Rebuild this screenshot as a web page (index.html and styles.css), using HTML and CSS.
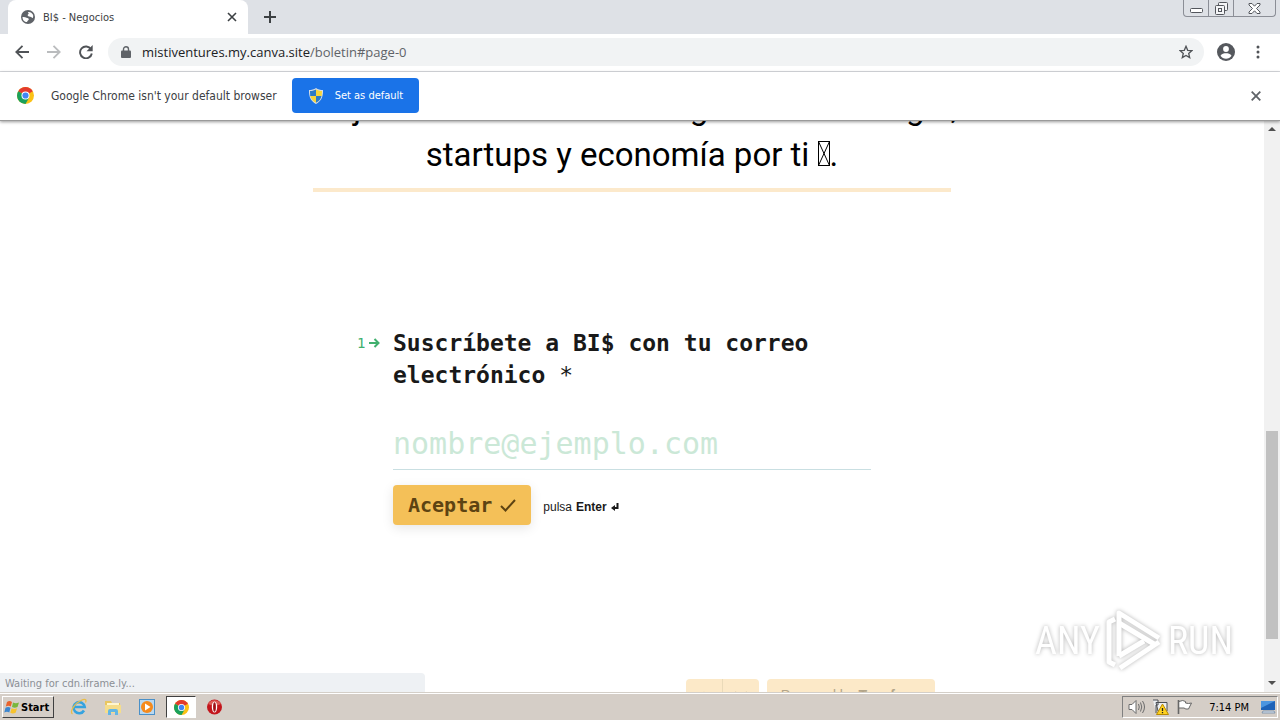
FILE: index.html
```html
<!DOCTYPE html>
<html lang="es">
<head>
    <meta charset="UTF-8">
    <meta name="viewport" content="width=device-width, initial-scale=1.0">
    <title>BI$ - Negocios</title>
    <link rel="stylesheet" href="styles.css">
</head>
<body>
    <svg class="defs" width="0" height="0" aria-hidden="true">
        <symbol id="chrome" viewBox="0 0 16 16">
            <circle cx="8" cy="8" r="8" fill="#fbc116"/>
            <path d="M8 8 1.1 4A8 8 0 0 1 14.9 4z" fill="#e33b2e"/>
            <path d="M1.1 4A8 8 0 0 0 8 16l3.4-6L8 8z" fill="#1aa15c"/>
            <circle cx="8" cy="8" r="3.8" fill="#fff"/>
            <circle cx="8" cy="8" r="2.9" fill="#4285f4"/>
        </symbol>
    </svg>

    <header class="tabstrip">
        <div class="tab">
            <svg class="globe" width="14" height="14" viewBox="0 0 14 14">
                <circle cx="7" cy="7" r="7" fill="#5f6368"/>
                <path d="M1.500 7c1.500-.3 3 .1 4 .8 1 .6 2.500.4 2.300 1.600-.2 1-1.500 1-1.800 2.600C3.500 12 1.500 10 1.500 7zM7 2c2-.4 4 .6 5 2.800.4 1.200.2 2.400-.2 3.200-1.300-.2-1.300-1.300-2.600-1.300-1.400 0-2.700-.5-2.500-1.700.1-.8 1-.6 1-1.400C7.700 2.900 7 2.800 7 2z" fill="#fff"/>
            </svg>
            <span class="tab-title">BI$ - Negocios</span>
            <button class="icon-btn" aria-label="Close tab">
                <svg width="10" height="10" viewBox="0 0 10 10"><path d="M1 1l8 8M9 1L1 9" stroke="#3c4043" stroke-width="1.600"/></svg>
            </button>
        </div>
        <button class="icon-btn new-tab" aria-label="New tab">
            <svg width="12" height="12" viewBox="0 0 12 12"><path d="M6 0v12M0 6h12" stroke="#3c4043" stroke-width="2"/></svg>
        </button>
        <div class="window-buttons">
            <button class="minimize" aria-label="Minimize">
                <svg width="13" height="5" viewBox="0 0 13 5"><rect x=".5" y=".5" width="12" height="4" rx="1" fill="#fff" stroke="#53565c"/></svg>
            </button>
            <button aria-label="Restore">
                <svg width="13" height="13" viewBox="0 0 13 13" fill="#f4f5f7" stroke="#53565c"><rect x="3.500" y=".5" width="9" height="8" rx="1"/><rect x=".5" y="3.500" width="9" height="9" rx="1"/><rect x="3.500" y="6.500" width="3" height="3"/></svg>
            </button>
            <button class="wide" aria-label="Close">
                <svg width="13" height="11" viewBox="0 0 13 11"><path d="M1 .5h3l2.500 2.700L9 .5h3v1.500L8.500 5.500 12 9v1.500H9L6.500 7.800 4 10.500H1V9l3.500-3.500L1 2z" fill="#fff" stroke="#53565c"/></svg>
            </button>
        </div>
    </header>

    <nav class="toolbar">
        <button class="icon-btn" aria-label="Back">
            <svg width="14" height="14" viewBox="0 0 14 14" fill="none" stroke="#505357" stroke-width="1.800"><path d="M14 7H1.500M7.500 .8 1.300 7l6.200 6.200"/></svg>
        </button>
        <button class="icon-btn" aria-label="Forward">
            <svg width="14" height="14" viewBox="0 0 14 14" fill="none" stroke="#babcbe" stroke-width="1.800"><path d="M0 7h12.500M6.500 .8 12.700 7l-6.200 6.200"/></svg>
        </button>
        <button class="icon-btn" aria-label="Reload">
            <svg width="14" height="14" viewBox="0 0 14 14"><path d="M12 4.300A5.900 5.900 0 1 0 12.800 8.500" fill="none" stroke="#505357" stroke-width="1.900"/><path d="M13.700 0v6.200H7.500z" fill="#505357"/></svg>
        </button>
        <div class="address">
            <svg width="10" height="12" viewBox="0 0 10 12"><rect y="4.500" width="10" height="7.500" rx="1" fill="#5f6368"/><path d="M2.500 5V3.200a2.500 2.500 0 0 1 5 0V5" fill="none" stroke="#5f6368" stroke-width="1.400"/></svg>
            <a class="url" href="#page-0">mistiventures.my.canva.site<span>/boletin#page-0</span></a>
            <button class="icon-btn" aria-label="Bookmark">
                <svg width="14" height="14" viewBox="0 0 14 14"><path d="M7 1.300l1.700 4 4.200.3-3.200 2.800 1 4.200L7 10.400l-3.700 2.200 1-4.200L1.100 5.600l4.200-.3z" fill="none" stroke="#505357" stroke-width="1.300"/></svg>
            </button>
        </div>
        <button class="icon-btn" aria-label="Profile">
            <svg width="18" height="18" viewBox="0 0 18 18"><circle cx="9" cy="9" r="9" fill="#55585d"/><circle cx="9" cy="6" r="2.900" fill="#fff"/><path d="M3.500 12.800c1-2 3.500-2.600 5.500-2.600s4.500.6 5.500 2.600a6.600 6.600 0 0 1-11 0z" fill="#fff"/></svg>
        </button>
        <button class="icon-btn menu-btn" aria-label="Menu">
            <svg width="4" height="14" viewBox="0 0 4 14" fill="#505357"><circle cx="2" cy="2" r="1.500"/><circle cx="2" cy="7" r="1.500"/><circle cx="2" cy="12" r="1.500"/></svg>
        </button>
    </nav>

    <div class="infobar">
        <svg width="17" height="17"><use href="#chrome"/></svg>
        <span class="infobar-text">Google Chrome isn't your default browser</span>
        <button class="default-btn">
            <svg width="14" height="16" viewBox="0 0 14 16"><path d="M7 0c2 1.500 4.500 2 7 2 .3 6-1.500 11-7 14C1.500 13 -.3 8 0 2c2.500 0 5-.5 7-2z" fill="#d5dde4"/><path d="M7 1.500V8H1.200L1 3C3.500 3 5.500 2.400 7 1.500zM7 8h5.500c-.5 3-2.500 5.300-5.500 6.800z" fill="#2c7bc6"/><path d="M7 1.500V8h5.700L13 3C10.500 3 8.500 2.400 7 1.500zM7 8H1.300c.7 3 2.700 5.300 5.700 6.800z" fill="#f6d53b"/></svg>
            Set as default
        </button>
        <button class="icon-btn infobar-close" aria-label="Dismiss">
            <svg width="10" height="10" viewBox="0 0 10 10"><path d="M.7 .7l8.600 8.600M9.300 .7L.7 9.300" stroke="#5f6368" stroke-width="1.800"/></svg>
        </button>
    </div>

    <div class="viewport">
        <main class="page">
            <h1 class="headline">
                Mejores noticias de los negocios tecnología,<br>
                startups y economía por ti <svg class="tofu" width="12" height="25" viewBox="0 0 12 25" fill="none" stroke="#000"><rect x=".5" y=".5" width="11" height="24"/><path d="M.5 .5l11 24M11.500 .5l-11 24"/></svg>.
            </h1>
            <hr class="rule">
            <form class="question">
                <span class="number">1
                    <svg width="11" height="10" viewBox="0 0 11 10"><path d="M0 5h9M5.500 1l4 4-4 4" fill="none" stroke="#41b06e" stroke-width="2"/></svg>
                </span>
                <div class="answer">
                    <label for="email">Suscríbete a BI$ con tu correo electrónico <span>*</span></label>
                    <input type="email" id="email" placeholder="nombre@ejemplo.com">
                    <div class="actions">
                        <button type="button" class="accept">Aceptar
                            <svg width="16" height="13" viewBox="0 0 16 13"><path d="M1 7l4.500 4.500L15 1" fill="none" stroke="#5d4312" stroke-width="2"/></svg>
                        </button>
                        <span class="hint">pulsa <b>Enter</b>
                            <svg width="8" height="8" viewBox="0 0 8 8"><path d="M6.500 0v5H3" fill="none" stroke="#191919" stroke-width="2"/><path d="M0 5l4-3v6z" fill="#191919"/></svg>
                        </span>
                    </div>
                </div>
            </form>
            <footer class="form-footer">
                <div class="pager">
                    <button aria-label="Anterior"><svg width="14" height="9" viewBox="0 0 14 9"><path d="M1 8l6-6 6 6" fill="none" stroke="#d8c8aa" stroke-width="2"/></svg></button>
                    <button aria-label="Siguiente"><svg width="14" height="9" viewBox="0 0 14 9"><path d="M1 1l6 6 6-6" fill="none" stroke="#d8c8aa" stroke-width="2"/></svg></button>
                </div>
                <a class="powered" href="#typeform">Powered by <b>Typeform</b></a>
            </footer>
        </main>
        <div class="scrollbar">
            <svg width="8" height="4" viewBox="0 0 8 4"><path d="M0 4l4-4 4 4z" fill="#505050"/></svg>
            <div class="track"><div class="thumb"></div></div>
            <svg width="8" height="4" viewBox="0 0 8 4"><path d="M0 0l4 4 4-4z" fill="#505050"/></svg>
        </div>
        <div class="status">Waiting for cdn.iframe.ly...</div>
        <div class="watermark">
            <span>ANY</span>
            <svg width="60" height="66" viewBox="0 0 60 66" fill="none" stroke="#fff" stroke-width="5" stroke-linejoin="round">
                <path d="M11 11 5 14v40l6 3"/>
                <path d="M15 48V5l40 25"/>
                <path d="M15 15l35 21"/>
                <path d="M55 34 16 60"/>
                <path d="M15 48l25-15"/>
            </svg>
            <span>RUN</span>
        </div>
    </div>

    <footer class="taskbar">
        <button class="start">
            <svg width="16" height="15" viewBox="0 0 16 15"><path d="M3 2c2-1.500 3.500-1 5 0L6.800 6.500c-1.500-1-3-1.200-5 0z" fill="#e9632c"/><path d="M9 2.500c2 1 3.500 1 6 0l-1.500 4.500c-2 1-3.500 1-5.500 0z" fill="#79b73c"/><path d="M1.500 7.800c2-1.200 3.500-1 5 0L5.300 12.500c-1.500-1-3-1.200-5 0z" fill="#3c86cf"/><path d="M7.600 8.200c2 1 3.500 1 5.500 0l-1.500 4.500c-2 1-3.500 1-5.300 0z" fill="#f7c32e"/></svg>
            Start
        </button>
        <div class="apps">
            <button aria-label="Internet Explorer">
                <svg width="18" height="18" viewBox="0 0 18 18" fill="none"><path d="M14 12.500A5.600 5.600 0 1 1 14.700 9H5" stroke="#35a3df" stroke-width="2.600"/><path d="M2.500 16C-1 14 5 5 11 2.500c4-2 6-1 4.500 2" stroke="#e9bd48" stroke-width="1.300"/></svg>
            </button>
            <button aria-label="Explorer">
                <svg width="18" height="18" viewBox="0 0 18 18"><path d="M1 3h6l1 2h8v10H1z" fill="#e9c65f"/><path d="M3 5h12v4H3z" fill="#fff6cf"/><path d="M1 7h16v8H1z" fill="#f5dd8b"/><path d="M4 17v-4q0-2 2-2h6q2 0 2 2v4h-3v-3H7v3z" fill="#62b6e4"/></svg>
            </button>
            <button aria-label="Media Player">
                <svg width="18" height="18" viewBox="0 0 18 18"><rect x="1.500" y="1.500" width="15" height="15" fill="#b9d8f0" stroke="#4a90c8"/><circle cx="9" cy="9" r="6" fill="#f58a1c"/><path d="M7 5.500 12.500 9 7 12.500z" fill="#fff"/></svg>
            </button>
            <button class="active" aria-label="Chrome">
                <svg width="15" height="15"><use href="#chrome"/></svg>
            </button>
            <button aria-label="Opera">
                <svg width="18" height="18" viewBox="0 0 18 18"><circle cx="8.500" cy="9" r="7.500" fill="#c3151c"/><path d="M2 6a7.500 7.500 0 0 1 13 0q-6.500 3-13 0z" fill="#dc5a55"/><ellipse cx="8.500" cy="9" rx="2.700" ry="5.500" fill="#fff"/><ellipse cx="8.500" cy="9" rx="1.400" ry="4.800" fill="#a11116"/></svg>
            </button>
        </div>
        <div class="tray">
            <svg width="18" height="16" viewBox="0 0 18 16" fill="none" stroke="#6b6b6b"><path d="M1 5.500h3l4-4v13l-4-4H1z" fill="#fff"/><path d="M10.500 5q1.500 3 0 6M12.500 3.500q2.500 4.500 0 9M14.500 2q4 6 0 12"/></svg>
            <svg width="18" height="16" viewBox="0 0 18 16"><path d="M1 1h5v5H4v8M4 3.500h11V12H6z" fill="#eceff2" stroke="#4b4f55"/><path d="M10.500 5 16.500 15.500h-12z" fill="#ffd21f" stroke="#b98a00"/><path d="M10.500 9v3M10.500 13v1.300" stroke="#222" stroke-width="1.300"/></svg>
            <svg width="18" height="16" viewBox="0 0 18 16"><path d="M3 2.500q4-2 6.500 0v1.500q3 1 6 0L13.500 8l-1 2q-3 .5-4.500-1H3" fill="#fff" stroke="#666"/><path d="M2.500 1v14" stroke="#666" stroke-width="1.600"/></svg>
            <time>7:14 PM</time>
            <svg width="16" height="16" viewBox="0 0 16 16"><path d="M1 2h14v9H1z" fill="#1d62b8"/><path d="M1 2h14L1 9z" fill="#4b95e0"/><path d="M3 12h11l1 2H2z" fill="#dfe8f3" stroke="#8196ad"/></svg>
        </div>
    </footer>
</body>
</html>
```
FILE: styles.css
```css
* {
    margin: 0;
    padding: 0;
    box-sizing: border-box;
}

body {
    height: 100vh;
    display: flex;
    flex-direction: column;
    overflow: hidden;
    background: #fff;
    color: #3c4043;
    font-family: "DejaVu Sans Condensed", "DejaVu Sans", sans-serif;
    font-size: 11px;
}

button {
    border: none;
    background: none;
    font: inherit;
    color: inherit;
    cursor: pointer;
}

a {
    color: inherit;
    text-decoration: none;
}

svg {
    display: block;
    flex: none;
}

.defs {
    position: absolute;
}

.icon-btn {
    display: flex;
    align-items: center;
    justify-content: center;
}

/* tab strip */
.tabstrip {
    height: 34px;
    flex: none;
    display: flex;
    align-items: center;
    padding-left: 8px;
    background: #dee1e6;
}

.tab {
    width: 240px;
    height: 34px;
    display: flex;
    align-items: center;
    padding: 0 11px 0 13px;
    background: #fff;
    border-radius: 8px 8px 0 0;
}

.tab-title {
    flex: 1;
    margin-left: 8px;
}

.new-tab {
    margin-left: 16px;
}

.window-buttons {
    display: flex;
    align-self: flex-start;
    height: 17px;
    margin: 0 4px 0 auto;
    border: 1px solid #8b8e96;
    border-top: none;
    border-radius: 0 0 4px 4px;
}

.window-buttons button {
    width: 25px;
    display: flex;
    align-items: center;
    justify-content: center;
    border-right: 1px solid #8b8e96;
}

.window-buttons .minimize {
    align-items: flex-end;
    padding-bottom: 3px;
}

.window-buttons .wide {
    width: 41px;
    border-right: none;
}

/* toolbar */
.toolbar {
    height: 38px;
    flex: none;
    display: flex;
    align-items: center;
    gap: 18px;
    padding: 0 20px 1px 15px;
    border-bottom: 1px solid #dadce0;
}

.address {
    flex: 1;
    height: 28px;
    display: flex;
    align-items: center;
    margin: 0 -5px 0 -3px;
    padding: 0 11px 0 13px;
    border-radius: 14px;
    background: #f1f3f4;
}

.url {
    flex: 1;
    margin-left: 11px;
    font-family: "Open Sans", sans-serif;
    font-size: 13px;
    color: #202124;
}

.url span {
    color: #5f6368;
}

.menu-btn {
    margin-left: 3px;
}

/* default browser bar */
.infobar {
    height: 49px;
    flex: none;
    display: flex;
    align-items: center;
    padding: 0 19px 1px 17px;
    border-bottom: 1px solid #9a9a9a;
    box-shadow: 0 1px 3px rgba(0, 0, 0, 0.4);
    z-index: 1;
}

.infobar-text {
    margin: 0 15px 0 17px;
    font-size: 12px;
}

.default-btn {
    display: flex;
    align-items: center;
    gap: 12px;
    height: 35px;
    padding: 0 16px 0 17px;
    border-radius: 4px;
    background: #1a73e8;
    color: #fff;
}

.infobar-close {
    margin-left: auto;
}

/* page */
.viewport {
    position: relative;
    flex: 1;
    min-height: 0;
    display: flex;
    overflow: hidden;
}

.page {
    flex: 1;
    display: flex;
    flex-direction: column;
    align-items: center;
}

.headline {
    margin-top: -37px;
    font: 400 33px/47px Roboto, sans-serif;
    color: #000;
    text-align: center;
    white-space: nowrap;
}

.tofu {
    display: inline-block;
}

.rule {
    width: 638px;
    max-width: 100%;
    margin-top: 10px;
    border: none;
    border-top: 4px solid #fce9cb;
}

.question {
    width: 550px;
    max-width: 100%;
    display: grid;
    grid-template-columns: 36px 1fr 36px;
    margin-top: 135px;
    font-family: "DejaVu Sans Mono", monospace;
    color: #191919;
}

.number {
    display: flex;
    align-items: center;
    gap: 4px;
    height: 32px;
    font-size: 14px;
    color: #41b06e;
}

.answer label {
    display: block;
    font-size: 23px;
    font-weight: bold;
    line-height: 32px;
}

.answer label span {
    font-weight: normal;
}

.answer input {
    width: 100%;
    height: 46px;
    margin-top: 33px;
    padding-bottom: 6px;
    border: none;
    border-bottom: 1px solid #c9dfe2;
    outline: none;
    background: none;
    font: 30px "DejaVu Sans Mono", monospace;
    color: #41b06e;
}

.answer input::placeholder {
    color: #cbe8d7;
    opacity: 1;
}

.actions {
    display: flex;
    align-items: center;
    gap: 12px;
    margin-top: 15px;
}

.accept {
    display: flex;
    align-items: center;
    gap: 8px;
    height: 40px;
    padding: 0 15px;
    border-radius: 4px;
    background: #f4c058;
    box-shadow: 0 3px 12px rgba(0, 0, 0, 0.1);
    font-size: 20px;
    font-weight: bold;
    color: #5d4312;
}

.hint {
    display: flex;
    align-items: center;
    gap: 4px;
    padding-top: 4px;
    font: 12px "Liberation Sans", Arial, sans-serif;
}

.form-footer {
    width: 606px;
    max-width: 100%;
    flex: none;
    display: flex;
    justify-content: flex-end;
    gap: 8px;
    margin-top: 154px;
}

.pager {
    display: flex;
}

.pager button {
    width: 36px;
    height: 32px;
    display: flex;
    align-items: center;
    justify-content: center;
    background: #fce9c8;
    border-radius: 4px 0 0 4px;
}

.pager button + button {
    width: 37px;
    border-left: 1px solid #eadab9;
    border-radius: 0 4px 4px 0;
}

.powered {
    width: 168px;
    height: 32px;
    border-radius: 4px;
    background: #fce9c8;
    color: #b3a589;
    font: 14px/32px "Liberation Sans", Arial, sans-serif;
    text-align: center;
}

.scrollbar {
    width: 16px;
    display: flex;
    flex-direction: column;
    align-items: center;
    padding: 6px 0 7px;
    background: #f1f1f1;
}

.track {
    flex: 1;
    width: 12px;
    display: flex;
    flex-direction: column;
    padding: 6px 0;
}

.track::before {
    content: "";
    flex: 294;
}

.track::after {
    content: "";
    flex: 36;
}

.thumb {
    flex: 208;
    background: #c1c1c1;
}

.status {
    position: absolute;
    left: 0;
    bottom: 0;
    width: 425px;
    height: 19px;
    padding-left: 5px;
    border-top-right-radius: 4px;
    background: #eef1f4;
    color: #8b8f94;
    line-height: 21px;
}

.watermark {
    position: absolute;
    right: 47px;
    bottom: 18px;
    display: flex;
    align-items: center;
    gap: 4px;
    font: 38px/48px "Roboto Condensed", "Noto Sans CJK SC", sans-serif;
    color: #fff;
    filter: drop-shadow(0 0 2px rgba(0, 0, 0, 0.3));
}

/* taskbar */
.taskbar {
    height: 28px;
    flex: none;
    display: flex;
    align-items: center;
    padding: 1px 2px 0 2px;
    border-top: 1px solid #d4cfc8;
    box-shadow: inset 0 1px #fff;
    background: #d5cec7;
    color: #000;
}

.start {
    display: flex;
    align-items: center;
    gap: 1px;
    height: 22px;
    padding: 0 4px 0 1px;
    border: 1px solid;
    border-color: #fff #404040 #404040 #fff;
    font-weight: bold;
}

.apps {
    display: flex;
    gap: 4px;
    margin-left: 10px;
}

.apps button {
    width: 30px;
    height: 22px;
    display: flex;
    align-items: center;
    justify-content: center;
}

.apps .active {
    border: 1px solid;
    border-color: #404040 #fff #fff #404040;
    background: #fff;
}

.tray {
    display: flex;
    align-items: center;
    gap: 6px;
    height: 22px;
    margin-left: auto;
    padding: 0 1px 0 5px;
    border: 1px solid;
    border-color: #808080 #fff #fff #808080;
}

.tray time {
    margin: 0 5px 0 9px;
}
```
